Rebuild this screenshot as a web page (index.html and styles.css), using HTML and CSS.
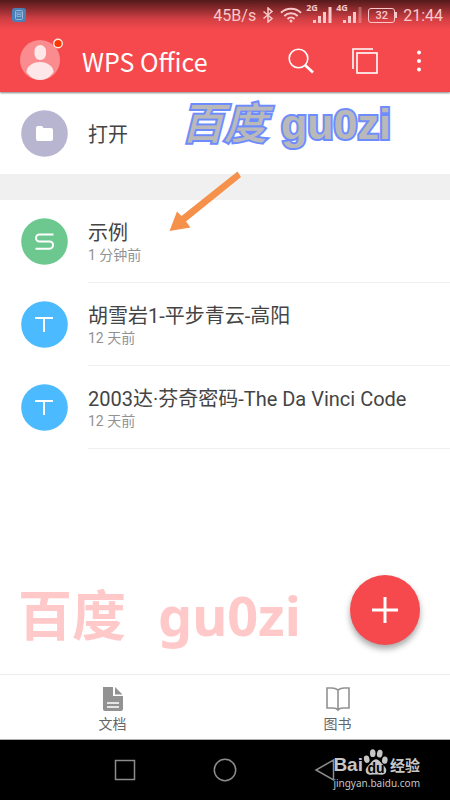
FILE: index.html
```html
<!DOCTYPE html>
<html lang="zh-CN">
<head>
<meta charset="utf-8">
<meta name="viewport" content="width=device-width, initial-scale=1">
<title>WPS Office</title>
<link rel="stylesheet" href="styles.css">
</head>
<body>
<div class="screen">
  <header class="top">
    <div class="status">
      <svg class="status-app" width="14" height="14" viewBox="0 0 14 14" fill="none"><rect width="14" height="14" rx="3" fill="#4a80b8"/><rect x="3.5" y="2.5" width="7" height="9" rx="1" stroke="#9bb6d6"/><path d="M3.500 5h7M5 6.500h4v2H5z" stroke="#9bb6d6" stroke-width=".8"/></svg>
      <span class="speed">45B/s</span>
      <svg class="bluetooth" width="12" height="16" viewBox="0 0 12 16" fill="none" stroke="#f9c8ca" stroke-width="1.5"><path d="M1.500 4.500l8.500 7L6 15V1l4 3.500-8.500 7"/></svg>
      <svg class="wifi" width="22" height="16" viewBox="0 0 22 16" fill="none" stroke="#f9c8ca" stroke-width="2"><path d="M1 5.800C6.500.4 15.500.4 21 5.800M4.300 9C8 5.300 14 5.300 17.700 9M7.500 12c2-2 5-2 7 0"/><circle cx="11" cy="14" r="1.500" fill="#f9c8ca" stroke="none"/></svg>
      <span class="signal"><small>2G</small><svg width="20" height="16" viewBox="0 0 20 16" fill="#f9c8ca"><path d="M1 13h3v3H1zM6 9h3v7H6zM11 5h3v11h-3zM16.500 0h3v16h-3z"/></svg></span>
      <span class="signal"><small>4G</small><svg width="20" height="16" viewBox="0 0 20 16" fill="#f9c8ca"><path d="M1 13h3v3H1zM6 9h3v7H6zM11 5h3v11h-3z"/><path d="M16.500 0h3v16h-3z" opacity=".35"/></svg></span>
      <span class="battery">32</span>
      <span class="clock">21:44</span>
    </div>
    <div class="appbar">
      <button class="avatar" aria-label="账户">
        <svg width="44" height="44" viewBox="0 0 44 44"><circle cx="20" cy="23" r="20" fill="#fa8b8e"/><rect x="14.500" y="8" width="11.500" height="15" rx="5.700" fill="#fee7e8"/><path d="M6.500 35c0-5.500 6-10 13.500-10s13.500 4.500 13.500 10c-3 5-8 8-13.500 8S9.500 40 6.500 35z" fill="#fee7e8"/><circle cx="38" cy="6.500" r="4.300" fill="#ff3600" stroke="#ffe9e0" stroke-width="1.400"/></svg>
      </button>
      <h1>WPS Office</h1>
      <button class="tool" aria-label="搜索"><svg width="26" height="26" viewBox="0 0 26 26" fill="none" stroke="#fff"><circle cx="10.500" cy="10.500" r="9.300" stroke-width="1.600"/><path d="M17 17l8 7.500" stroke-width="2.600"/></svg></button>
      <button class="tool" aria-label="窗口"><svg width="26" height="26" viewBox="0 0 26 26" fill="none" stroke="#fff" stroke-width="1.600"><path d="M1 21V1h20"/><rect x="5" y="5" width="20" height="20"/></svg></button>
      <button class="tool" aria-label="更多"><svg width="6" height="22" viewBox="0 0 6 22" fill="#fff"><circle cx="3" cy="2.500" r="2"/><circle cx="3" cy="11" r="2"/><circle cx="3" cy="19.500" r="2"/></svg></button>
    </div>
  </header>

  <main>
    <a class="open" href="#open">
      <svg class="badge" width="47" height="47" viewBox="0 0 47 47"><circle cx="23.500" cy="23.500" r="23.300" fill="#b8b5d1"/><path d="M15 18a2 2 0 0 1 2-2h4l1.500 2H30a2 2 0 0 1 2 2v9a2 2 0 0 1-2 2H17a2 2 0 0 1-2-2z" fill="#fff"/></svg>
      <span class="text"><span class="name">打开</span></span>
    </a>
    <div class="band"></div>
    <ul class="files">
      <li><a href="#sample">
        <svg class="badge" width="47" height="47" viewBox="0 0 47 47" fill="none"><circle cx="23.500" cy="23.500" r="23.300" fill="#6cc88f"/><path d="M32.500 16.500H18.500a3.500 3.500 0 0 0 0 7H28.500a3.600 3.600 0 0 1 0 7.200H14.500" stroke="#fff" stroke-width="2"/></svg>
        <span class="text"><span class="name">示例</span><span class="time">1 分钟前</span></span>
      </a></li>
      <li><a href="#hu">
        <svg class="badge" width="47" height="47" viewBox="0 0 47 47" fill="none"><circle cx="23.500" cy="23.500" r="23.300" fill="#4bbaff"/><path d="M14 17h18M23 17v14" stroke="#fff" stroke-width="2"/></svg>
        <span class="text"><span class="name">胡雪岩1-平步青云-高阳</span><span class="time">12 天前</span></span>
      </a></li>
      <li><a href="#davinci">
        <svg class="badge" width="47" height="47" viewBox="0 0 47 47" fill="none"><circle cx="23.500" cy="23.500" r="23.300" fill="#4bbaff"/><path d="M14 17h18M23 17v14" stroke="#fff" stroke-width="2"/></svg>
        <span class="text"><span class="name">2003达·芬奇密码-The Da Vinci Code</span><span class="time">12 天前</span></span>
      </a></li>
    </ul>
    <div class="mark-outline"><span class="brush">百度</span><span>gu0zi</span></div>
    <svg class="arrow" width="74" height="62" viewBox="0 0 74 62"><path d="M69.500.5L73 6 18 50.500l4.500 6L1.500 60 9 40.500l4.500 4.500z" fill="#f5914a"/></svg>
    <div class="mark-pink"><span>百度</span><span>gu0zi</span></div>
    <button class="add" aria-label="新建"><svg width="26" height="26" viewBox="0 0 26 26" stroke="#fff" stroke-width="3"><path d="M0 13h26M13 0v26"/></svg></button>
  </main>

  <nav class="tabs">
    <a href="#docs"><svg width="22" height="26" viewBox="0 0 22 26"><path d="M1 1h10v9h10v13a2 2 0 0 1-2 2H3a2 2 0 0 1-2-2z" fill="#929292"/><path d="M13 1l7.500 7.500H13z" fill="#929292"/><path d="M5 17h12M5 21h12" stroke="#fff" stroke-width="1.600"/></svg>文档</a>
    <a href="#books"><svg width="26" height="26" viewBox="0 0 26 26" fill="none" stroke="#929292" stroke-width="1.600"><path d="M13 4c-2-1.500-3.500-2-6-2H2v20h6c2.500 0 4 .5 5 2 1-1.500 2.500-2 5-2h6V2h-5c-2.500 0-4 .5-6 2zV24"/></svg>图书</a>
  </nav>

  <footer class="system">
    <button aria-label="最近任务"><svg width="22" height="22" viewBox="0 0 22 22" fill="none" stroke="#8c8c8c" stroke-width="1.500"><rect x="1.500" y="1.500" width="19" height="19"/></svg></button>
    <button aria-label="主页"><svg width="24" height="24" viewBox="0 0 24 24" fill="none" stroke="#8c8c8c" stroke-width="1.500"><circle cx="12" cy="12" r="10.700"/></svg></button>
    <button aria-label="返回"><svg width="22" height="24" viewBox="0 0 22 24" fill="none" stroke="#8c8c8c" stroke-width="1.500"><path d="M19.500 2v20L2 12z"/></svg></button>
    <div class="source">
      <div class="logo"><span>Bai</span><span class="paw"><svg width="26" height="28" viewBox="0 0 28 28" fill="#c6c6c6"><ellipse cx="4" cy="11" rx="3" ry="4" transform="rotate(-12 4 11)"/><ellipse cx="10.500" cy="4.500" rx="3" ry="4.200"/><ellipse cx="18" cy="5" rx="3" ry="4.200" transform="rotate(10 18 5)"/><ellipse cx="23.500" cy="12" rx="3" ry="4" transform="rotate(10 23.500 12)"/><path d="M14 11c3 0 4.500 3 7 5.500 3.500 3.500 5 6 3.500 9-1.500 2.800-5 2-10.500 2s-9 .8-10.500-2c-1.500-3 0-5.500 3.500-9C9.500 14 11 11 14 11z"/></svg><b>du</b></span><span class="cn">经验</span></div>
      <div class="url">jingyan.baidu.com</div>
    </div>
  </footer>
</div>
</body>
</html>
```
FILE: styles.css
```css
* { box-sizing: border-box; }

body {
  margin: 0;
  background: #fff;
  color: #444;
  font-family: Roboto, "Noto Sans CJK SC", sans-serif;
}

button {
  padding: 0;
  border: 0;
  background: none;
}

a { color: inherit; text-decoration: none; }
svg { display: block; flex: none; }

.screen {
  display: flex;
  flex-direction: column;
  min-height: 100vh;
}

.top {
  position: relative;
  z-index: 1;
  background: linear-gradient(#54191b 0, #86292c 8px, #d13f43 19px, #f6494d 30px);
  box-shadow: 0 1px 2px rgba(0, 0, 0, 0.5);
}

.status {
  display: flex;
  align-items: center;
  height: 30px;
  padding: 0 7px 0 12px;
  color: #f9c8ca;
  font-size: 16px;
}

.speed { margin-left: auto; }
.bluetooth { margin: 0 6px; }
.wifi { margin-right: 4px; }

.signal {
  position: relative;
  padding-left: 6px;
  margin-right: 4px;
}

.signal small {
  position: absolute;
  top: -4px;
  left: 0;
  font: 700 9px/10px "Open Sans", sans-serif;
}

.battery {
  position: relative;
  width: 27px;
  margin: 0 8px 0 2px;
  border: 1px solid #f9c8ca;
  border-radius: 3px;
  font-size: 11px;
  font-weight: 500;
  line-height: 13px;
  text-align: center;
}

.battery::after {
  content: "";
  position: absolute;
  top: 3px;
  right: -3px;
  width: 2px;
  height: 6px;
  background: #f9c8ca;
}

.appbar {
  display: flex;
  align-items: center;
  height: 62px;
  padding: 0 28px 0 20px;
}

.avatar { margin-bottom: 4px; }

h1 {
  flex: 1;
  margin: 0 0 0 18px;
  color: #fff;
  font: 400 25px/40px "Noto Sans CJK SC", sans-serif;
}

.tool + .tool { margin-left: 38px; }

main {
  position: relative;
  flex: 1;
}

.open,
.files a {
  display: flex;
  align-items: center;
  gap: 20px;
  height: 82px;
  padding-left: 21px;
}

.files a { height: 83px; }

.text {
  display: flex;
  flex: 1;
  flex-direction: column;
  justify-content: center;
  align-self: stretch;
  padding-top: 4px;
}

.files .text { border-bottom: 1px solid #f0f0f0; }

.name {
  font-size: 20px;
  line-height: 24px;
}

.time {
  color: #929292;
  font-size: 14px;
  line-height: 20px;
}

.band { height: 26px; background: #f0f0f0; }

.files {
  margin: 0;
  padding: 0;
  list-style: none;
}

.mark-outline {
  position: absolute;
  top: 6px;
  left: 181px;
  display: flex;
  gap: 14px;
  color: #b9b9b9;
  font: 700 43px/52px "Liberation Sans", "Noto Sans CJK SC", sans-serif;
  -webkit-text-stroke: 4px #6f8cff;
  paint-order: stroke fill;
}

.brush {
  font-style: italic;
  font-weight: 500;
}

.arrow {
  position: absolute;
  top: 79px;
  left: 168px;
}

.mark-pink {
  position: absolute;
  bottom: 24px;
  left: 18px;
  display: flex;
  gap: 32px;
  color: #ffc9c9;
  font: 700 54px/70px "Noto Sans", "Noto Sans CJK SC", sans-serif;
}

.add {
  position: absolute;
  right: 30px;
  bottom: 29px;
  display: grid;
  place-items: center;
  width: 70px;
  height: 70px;
  border-radius: 50%;
  background: #f6494d;
  box-shadow: 0 4px 6px rgba(0, 0, 0, 0.35);
}

.tabs {
  display: flex;
  height: 66px;
  border-top: 1px solid #ececec;
  border-bottom: 1px solid #b0b0b0;
}

.tabs a {
  display: flex;
  flex: 1;
  flex-direction: column;
  align-items: center;
  padding-top: 11px;
  color: #666;
  font-size: 14px;
  line-height: 24px;
}

.system {
  position: relative;
  display: flex;
  justify-content: center;
  gap: 77px;
  height: 60px;
  background: #000;
}

.source {
  position: absolute;
  top: 8px;
  right: 30px;
  color: #c6c6c6;
}

.logo {
  display: flex;
  align-items: flex-end;
  height: 28px;
  font: 700 19px/22px "Liberation Sans", sans-serif;
}

.paw { position: relative; }

.paw b {
  position: absolute;
  right: 0;
  bottom: 0;
  left: 0;
  color: #000;
  font-size: 14px;
  line-height: 16px;
  text-align: center;
}

.cn {
  margin-left: 1px;
  font: 700 15px/22px "Noto Sans CJK SC", sans-serif;
}

.url {
  font: 400 10px/14px "Noto Sans", sans-serif;
}
```
